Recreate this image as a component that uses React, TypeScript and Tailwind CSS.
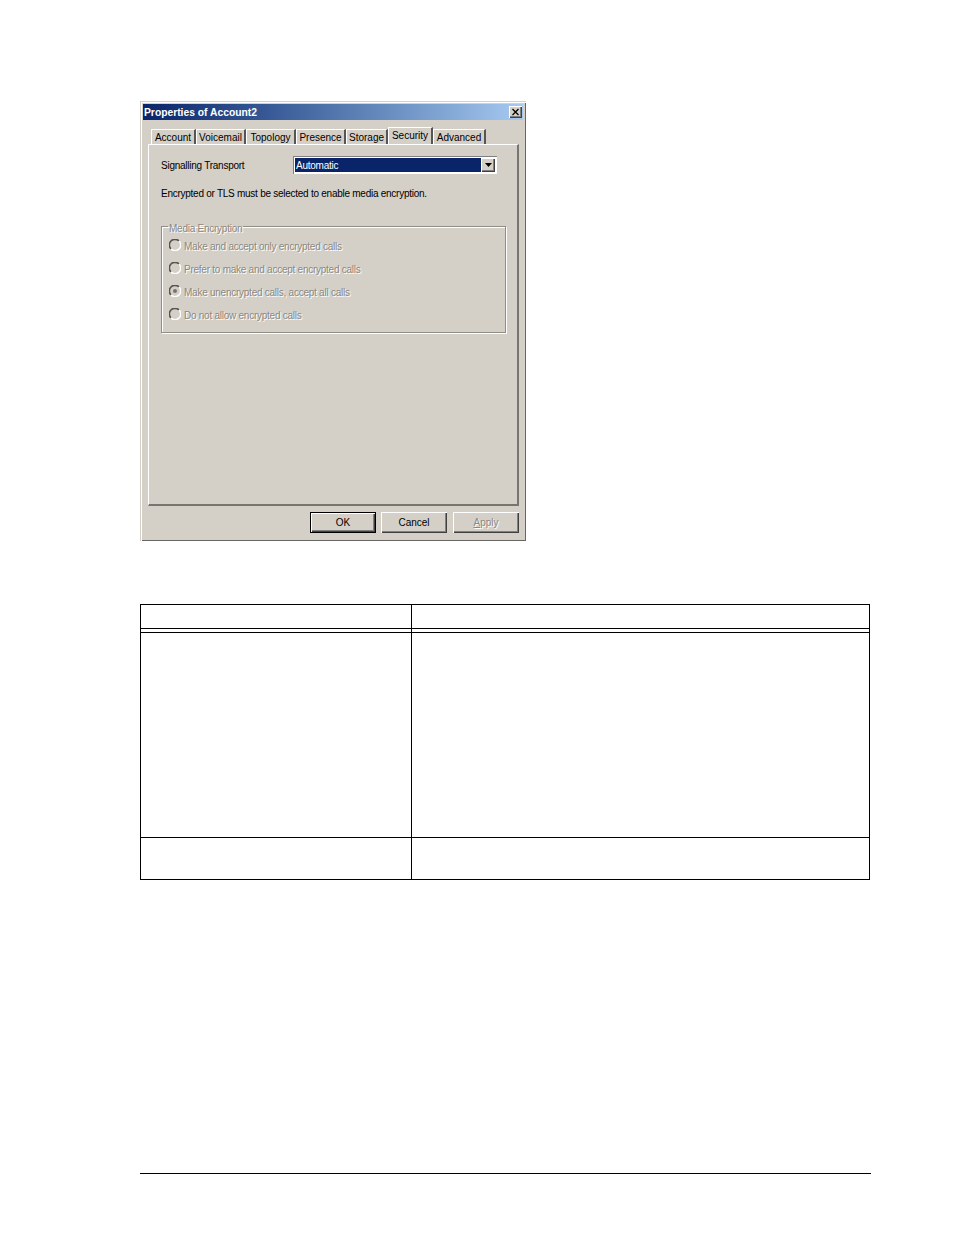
import React from "react";

const font = "font-['Liberation_Sans',Arial,sans-serif]";
const raised = "shadow-[inset_1px_1px_0_#ffffff,inset_-1px_-1px_0_#404040,inset_-2px_-2px_0_#808080]";
const disabledText = "text-[#8b8880] [text-shadow:1px_1px_0_#ffffff]";

const tabs = [
  { label: "Account", width: "w-[45px]" },
  { label: "Voicemail", width: "w-[50px]" },
  { label: "Topology", width: "w-[50px]" },
  { label: "Presence", width: "w-[50px]" },
  { label: "Storage", width: "w-[42px]" },
  { label: "Security", width: "w-[45px]", active: true },
  { label: "Advanced", width: "w-[53px]" },
];

const radios = [
  { label: "Make and accept only encrypted calls" },
  { label: "Prefer to make and accept encrypted calls" },
  { label: "Make unencrypted calls, accept all calls", checked: true },
  { label: "Do not allow encrypted calls" },
];

const Radio: React.FC<{ label: string; checked?: boolean }> = ({ label, checked }) => (
  <div className="flex items-center h-[23px] gap-[3px]">
    <svg width="12" height="12" viewBox="0 0 12 12" className="-mt-[2px]">
      <circle cx="6" cy="6" r="5.2" fill="#d4d0c8" />
      <path d="M10 2 A5.5 5.5 0 0 0 2 10" fill="none" stroke="#55544f" strokeWidth="1.6" />
      <path d="M10 2 A5.5 5.5 0 0 1 2 10" fill="none" stroke="#ffffff" strokeWidth="1.4" />
      {checked && <circle cx="6" cy="6" r="2" fill="#77756f" />}
    </svg>
    <span className={`pt-[2px] text-[10px] tracking-[-0.25px] leading-none ${disabledText}`}>{label}</span>
  </div>
);

const Button: React.FC<{ label: React.ReactNode; isDefault?: boolean; disabled?: boolean }> = ({ label, isDefault, disabled }) => (
  <div
    className={`w-[66px] h-[21px] flex items-center justify-center text-[10px] ${
      isDefault ? "border border-black" : ""
    } ${raised} ${disabled ? `ml-[1px] ${disabledText}` : "text-black"}`}
  >
    {label}
  </div>
);

const PropertiesDialog: React.FC = () => (
  <div className="w-[386px] h-[440px] bg-[#d4d0c8] p-[3px] flex flex-col shadow-[inset_1px_1px_0_#d4d0c8,inset_2px_2px_0_#ffffff,inset_-1px_-1px_0_#666666]">
    <div className="h-[16px] flex items-center justify-between pl-[1px] pr-[1px] bg-gradient-to-r from-[#0a246a] to-[#a6caf0]">
      <span className="pt-[2px] text-[10.3px] font-bold text-white leading-none">Properties of Account2</span>
      <div className={`w-[13px] h-[12px] bg-[#d4d0c8] flex items-center justify-center ${raised}`}>
        <svg width="9" height="8" viewBox="0 0 9 8">
          <path d="M1.5 1 L7.5 7 M7.5 1 L1.5 7" stroke="#000000" strokeWidth="1.3" />
        </svg>
      </div>
    </div>

    <div className="h-[24px] flex items-end pl-[8px]">
      {tabs.map((tab) => (
        <div
          key={tab.label}
          className={`${tab.width} flex items-center justify-center text-[10px] leading-none text-black bg-[#d4d0c8] border-t border-l border-white border-r-2 border-r-[#555555] ${
            tab.active ? "h-[17px] pb-[1px] border-r" : "h-[15px] pt-[1px]"
          }`}
        >
          {tab.label}
        </div>
      ))}
    </div>

    <div className="ml-[5px] w-[371px] h-[362px] px-[12px] pt-[11px] border-t border-l border-white border-r-2 border-b-2 border-r-[#77756f] border-b-[#77756f] text-black">
      <div className="flex items-center h-[18px]">
        <span className="w-[132px] text-[10px] tracking-[-0.25px]">Signalling Transport</span>
        <div className="w-[204px] h-[18px] bg-white p-[2px] flex shadow-[inset_1px_1px_0_#808080,inset_-1px_-1px_0_#ffffff]">
          <div className="flex-1 bg-[#0a246a] text-white text-[10px] tracking-[-0.25px] leading-[16px] pl-[1px]">Automatic</div>
          <div className={`w-[14px] bg-[#d4d0c8] flex items-center justify-center ${raised}`}>
            <svg width="7" height="4" viewBox="0 0 7 4">
              <path d="M0 0 H7 L3.5 4 Z" fill="#000000" />
            </svg>
          </div>
        </div>
      </div>

      <div className="mt-[13px] text-[10px] tracking-[-0.26px] leading-[14px]">Encrypted or TLS must be selected to enable media encryption.</div>

      <fieldset className="mt-[21px] w-[345px] h-[111px] border border-[#8f8d87] shadow-[1px_1px_0_#ffffff,inset_1px_1px_0_#ffffff] px-[7px]">
        <legend className={`-ml-[1px] px-[1px] h-[8px] text-[10px] tracking-[-0.25px] leading-[14px] ${disabledText}`}>Media Encryption</legend>
        <div className="mt-[4px]">
          {radios.map((radio) => (
            <Radio key={radio.label} label={radio.label} checked={radio.checked} />
          ))}
        </div>
      </fieldset>
    </div>

    <div className="mt-[6px] ml-[167px] flex gap-[5px]">
      <Button label="OK" isDefault />
      <Button label="Cancel" />
      <Button
        label={
          <>
            <span className="underline">A</span>pply
          </>
        }
        disabled
      />
    </div>
  </div>
);

const Row: React.FC<{ height: string; border?: boolean }> = ({ height, border = true }) => (
  <div className={`grid grid-cols-[271px_1fr] ${height} ${border ? "border-b border-black" : ""}`}>
    <div className="border-r border-black" />
    <div />
  </div>
);

export default function App() {
  return (
    <div className={`w-[954px] h-[1235px] bg-white pt-[101px] pl-[140px] ${font}`}>
      <PropertiesDialog />

      <div className="mt-[63px] w-[730px] border border-black">
        <Row height="h-[24px]" />
        <Row height="h-[4px]" />
        <Row height="h-[205px]" />
        <Row height="h-[41px]" border={false} />
      </div>

      <div className="mt-[293px] w-[731px] border-t border-black" />
    </div>
  );
}
